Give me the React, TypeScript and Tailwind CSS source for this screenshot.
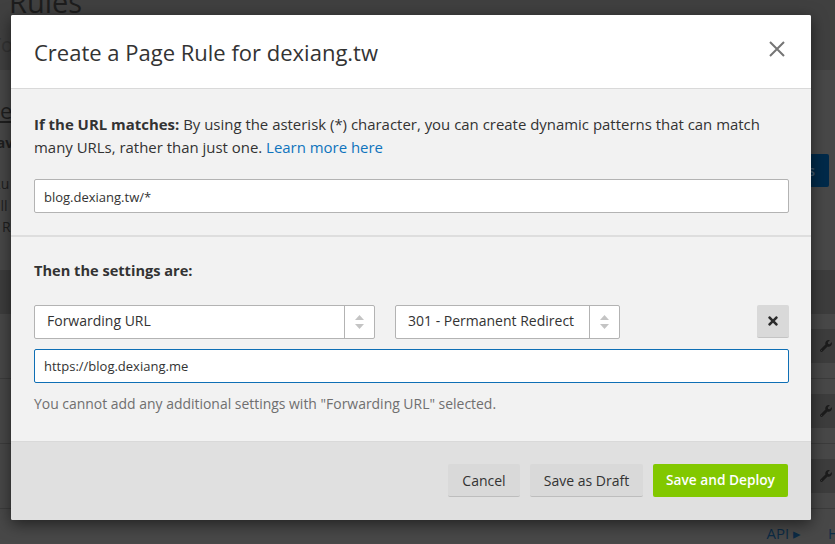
import { FaTimes, FaWrench } from "react-icons/fa";

function Arrows() {
    return (
        <svg width="9" height="14" viewBox="0 0 9 14" className="fill-[#c4c4c4]">
            <polygon points="4.5,0 9,5 0,5" />
            <polygon points="4.5,14 9,9 0,9" />
        </svg>
    )
}

function Select({ label, width }: { label: string; width: string }) {
    return (
        <div className={`flex h-[34px] ${width} rounded-[2px] border border-[#b3b3b3] bg-white`}>
            <div className="flex-1 pl-[12px] text-[14px] leading-[30px] whitespace-nowrap">{label}</div>
            <div className="flex w-[30px] items-center justify-center border-l border-[#b3b3b3]">
                <Arrows />
            </div>
        </div>
    )
}

function Row() {
    return (
        <div className="flex h-[65px] flex-col justify-center border-b border-[#3c3c3c]">
            <div className="ml-auto flex h-[34px] w-[60px] items-center justify-end bg-[#3d3d3d] pr-[3px] text-[#1c1c1c]">
                <FaWrench size={12} />
            </div>
        </div>
    )
}

export default function App() {
    return (
        <div className="relative h-[544px] w-[835px] overflow-hidden bg-[#484848] font-['Open_Sans',sans-serif] text-[14px] text-[#333333]">
            {/* page behind the overlay */}
            <div className="h-[70px] overflow-hidden bg-[#404040] pl-[9px]">
                <h1 className="mt-[-20px] text-[29px] leading-[44px] text-[#1d1d1d]">Rules</h1>
                <p className="mt-[7px] -ml-[19px] text-[20px] leading-[28px] text-[#333333]">Tool</p>
            </div>
            <div className="flex h-[200px] justify-between">
                <div className="w-[11px] overflow-hidden whitespace-nowrap text-[#1f1f1f]">
                    <p className="mt-[24px] text-[22px] leading-[32px] underline">e</p>
                    <p className="mt-[6px] -ml-[11px] font-bold">Sav</p>
                    <p className="mt-[20px] -ml-[8px] leading-[22px]">Ru</p>
                    <p className="-ml-[14px] leading-[21px]">will</p>
                    <p className="ml-[2px] leading-[21px]">R</p>
                </div>
                <div className="mt-[84px] mr-[6px] flex h-[33px] w-[60px] items-center justify-end rounded-[2px] bg-[#002a4a] pr-[14px] font-semibold text-[#3f5a70]">
                    s
                </div>
            </div>
            <div className="h-[44px] bg-[#3d3d3d]" />
            <div>
                <Row />
                <Row />
                <Row />
            </div>
            <div className="flex justify-end gap-[27px] pt-[13px] text-[15px] leading-[22px] text-[#0c2b45]">
                <span className="whitespace-nowrap">API ▸</span>
                <span className="w-[7px] overflow-hidden">H</span>
            </div>

            {/* modal */}
            <div className="absolute top-[15px] left-[11px] flex h-[505px] w-[800px] flex-col rounded-[2px] bg-[#f2f2f2] shadow-[0_4px_16px_rgba(0,0,0,0.55)]">
                <div className="flex h-[74px] items-start justify-between rounded-t-[2px] border-b border-[#d9d9d9] bg-white pr-[26px] pl-[23px]">
                    <h2 className="pt-[20px] text-[22px] leading-[34px]">Create a Page Rule for dexiang.tw</h2>
                    <svg width="16" height="16" viewBox="0 0 16 16" className="mt-[26px] stroke-[#757575]" strokeWidth="2">
                        <path d="M1 1 L15 15 M15 1 L1 15" />
                    </svg>
                </div>
                <div className="h-[148px] border-b-2 border-[#dedede] pr-[20px] pl-[23px] pt-[24px]">
                    <p className="text-[14.95px] leading-[23px]">
                        <b>If the URL matches:</b> By using the asterisk (*) character, you can create dynamic patterns that can match many URLs, rather than just one. <a className="text-[#0f74bd]">Learn more here</a>
                    </p>
                    <input
                        readOnly
                        value="blog.dexiang.tw/*"
                        className="mt-[20px] h-[34px] w-[755px] rounded-[2px] border border-[#b3b3b3] bg-white px-[9px] pt-[1px] text-[13px] outline-none"
                    />
                </div>
                <div className="flex-1 pr-[22px] pl-[23px] pt-[22px]">
                    <h3 className="text-[14.6px] leading-[23px] font-bold">Then the settings are:</h3>
                    <div className="mt-[23px] flex items-start">
                        <Select label="Forwarding URL" width="w-[341px]" />
                        <div className="ml-[20px]">
                            <Select label="301 - Permanent Redirect" width="w-[225px]" />
                        </div>
                        <button className="ml-auto flex h-[33px] w-[32px] items-center justify-center rounded-[2px] border-b border-[#c4c4c4] bg-[#d9d9d9] text-[#2b2b2b]">
                            <FaTimes size={14} />
                        </button>
                    </div>
                    <input
                        readOnly
                        value="https://blog.dexiang.me"
                        className="mt-[10px] h-[34px] w-[755px] rounded-[2px] border border-[#0f6fb5] bg-white px-[9px] text-[13px] outline-none"
                    />
                    <p className="mt-[10px] text-[13.95px] leading-[22px] text-[#6f6f6f]">You cannot add any additional settings with "Forwarding URL" selected.</p>
                </div>
                <div className="flex h-[79px] items-start justify-end gap-[10px] rounded-b-[2px] border-t border-[#d9d9d9] bg-[#e0e0e0] pt-[22px] pr-[23px]">
                    <button className="h-[33px] w-[72px] rounded-[2px] border-b border-[#bdbdbd] bg-[#d9d9d9]">Cancel</button>
                    <button className="h-[33px] w-[113px] rounded-[2px] border-b border-[#bdbdbd] bg-[#d9d9d9]">Save as Draft</button>
                    <button className="h-[33px] w-[135px] rounded-[2px] bg-[#82c800] text-[13.7px] font-semibold text-white">Save and Deploy</button>
                </div>
            </div>
        </div>
    )
}
